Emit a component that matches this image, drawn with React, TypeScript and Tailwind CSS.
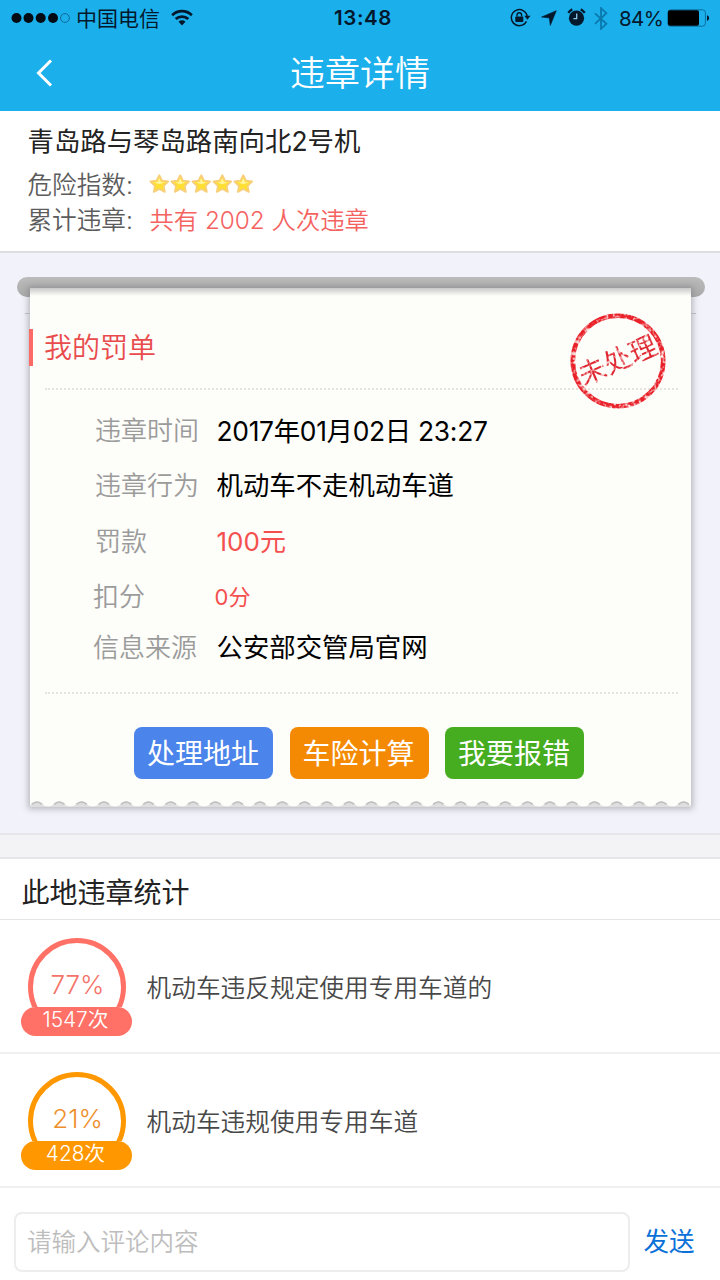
import { clsx } from 'clsx'

const details = [
  { label: '违章时间', value: '2017年01月02日 23:27', row: 'h-[54px] pl-[65px]', text: 'text-[26.4px] tracking-[-0.3px] text-black' },
  { label: '违章行为', value: '机动车不走机动车道', row: 'h-[55px] pl-[65px]', text: 'text-[26.4px] text-black' },
  { label: '罚款', value: '100元', row: 'h-[57px] pl-[65px]', text: 'text-[26px] text-[#f4504f]' },
  { label: '扣分', value: '0分', row: 'h-[54px] pl-[63px]', text: '-ml-0.5 text-[22px] text-[#f4504f]' },
  { label: '信息来源', value: '公安部交管局官网', row: 'h-[47px] pl-[63px]', text: 'text-[26.4px] text-black' },
]

const actions = [
  { label: '处理地址', color: 'bg-[#4b84ea]' },
  { label: '车险计算', color: 'bg-[#f48a04]' },
  { label: '我要报错', color: 'bg-[#45ad1f]' },
]

const stats = [
  {
    percent: '77%',
    count: '1547次',
    name: '机动车违反规定使用专用车道的',
    ring: 'border-[#ff7166] text-[#f4736a]',
    pill: 'bg-[#ff7166]',
  },
  {
    percent: '21%',
    count: '428次',
    name: '机动车违规使用专用车道',
    ring: 'border-[#ff9800] text-[#ee8f2c]',
    pill: 'bg-[#ff9800]',
  },
]

function StatusBar() {
  return (
    <div className="flex h-[37px] items-center text-[#04182c]">
      <div className="flex w-[334px] items-center pl-[11px]">
        <svg className="-mt-[2px]" width="60" height="12" viewBox="0 0 60 12">
          {[5.5, 17.5, 29.7, 42].map((x) => (
            <circle key={x} cx={x} cy="6" r="5" fill="#020a14" />
          ))}
          <circle cx="54" cy="6" r="4.4" fill="none" stroke="#0d6c98" strokeWidth="1" />
        </svg>
        <span className="ml-[5px] text-[21px] leading-none font-[380]">中国电信</span>
        <svg className="-mt-[3px] ml-[11px]" width="22" height="17" viewBox="0 0 22 17">
          <path d="M1.2 6.2a14 14 0 0 1 19.6 0" fill="none" stroke="currentColor" strokeWidth="2.8" />
          <path d="M4.7 10.1a9 9 0 0 1 12.6 0" fill="none" stroke="currentColor" strokeWidth="2.8" />
          <path d="M11 16.4 7.5 12.8a5 5 0 0 1 7 0z" fill="currentColor" />
        </svg>
      </div>
      <span className="w-[60px] text-[20.5px] leading-none font-semibold tracking-[0.6px]">13:48</span>
      <div className="flex flex-1 items-center pl-[116px]">
        {/* rotation lock */}
        <svg className="-mt-[2px]" width="21" height="19" viewBox="0 0 21 19">
          <path d="M16.4 13.4A8 8 0 1 1 17.3 9" fill="none" stroke="currentColor" strokeWidth="1.5" />
          <path d="M14.3 7.8h6.2l-3.1 4z" fill="currentColor" />
          <rect x="5.3" y="8.4" width="8" height="5.6" rx="0.8" fill="currentColor" />
          <path d="M7 8.6V7a2.3 2.3 0 0 1 4.6 0v1.6" fill="none" stroke="currentColor" strokeWidth="1.4" />
        </svg>
        {/* location */}
        <svg className="-mt-[2px] ml-[10px]" width="16" height="16" viewBox="0 0 16 16">
          <path d="M15.3.7 9.3 15.4 8.300 7.900.6 7z" fill="currentColor" stroke="currentColor" strokeWidth="0.6" />
        </svg>
        {/* alarm */}
        <svg className="-mt-[2px] ml-[10px]" width="19" height="19" viewBox="0 0 19 19">
          <circle cx="9.5" cy="10.2" r="7.6" fill="currentColor" />
          <path d="M1.3 4.9a9 9 0 0 1 4-3.5M17.7 4.9a9 9 0 0 0-4-3.5" fill="none" stroke="currentColor" strokeWidth="2.3" />
          <path d="M9.7 5.4v5.2H6.4" fill="none" stroke="#8fc9e8" strokeWidth="1.3" />
        </svg>
        {/* bluetooth */}
        <svg className="-mt-px ml-2" width="14" height="23" viewBox="0 0 14 23">
          <path d="m1 6.3 11.4 10.5L7 21.8V1.2l5.4 5L1 16.8" fill="none" stroke="#0a79ad" strokeWidth="1.8" />
        </svg>
        <span className="ml-[11px] w-[46px] pt-px text-[20.5px] leading-none tracking-[-0.6px]">84%</span>
        <svg className="-mt-px ml-[2px]" width="43" height="18" viewBox="0 0 43 18">
          <rect x="0.8" y="0.8" width="37.6" height="16.4" rx="2.8" fill="none" stroke="#0a6f9f" strokeWidth="1" />
          <rect x="1" y="1.2" width="31" height="15.6" rx="1.8" fill="#000" />
          <path d="M40 6.2c2.8.6 2.8 5 0 5.6z" fill="#04182c" />
        </svg>
      </div>
    </div>
  )
}

function Star() {
  return (
    <svg width="21" height="20" viewBox="0 0 21 20">
      <path
        d="m10.3 1.2 2.7 5.5 6.1.8-4.4 4.3 1.1 6.1-5.5-2.9-5.4 2.9 1-6.1L1.4 7.5l6.1-.8z"
        fill="#ffe030"
        stroke="#f8cf78"
        strokeWidth="1.8"
        strokeLinejoin="round"
      />
      <path d="m10.3 4 1.7 3.9 3.8.5-5.7 1.8-4.9-1.8 3.4-.5z" fill="#fff39c" />
    </svg>
  )
}

function Stamp() {
  return (
    <svg className="absolute top-[24px] left-[539px]" width="98" height="98" viewBox="0 0 98 98">
      <defs>
        <filter id="worn" x="0" y="0" width="100%" height="100%">
          <feTurbulence type="fractalNoise" baseFrequency="0.25" numOctaves="2" seed="9" result="noise" />
          <feColorMatrix in="noise" type="matrix" values="0 0 0 0 0  0 0 0 0 0  0 0 0 0 0  3 0 0 0 -0.6" result="holes" />
          <feComposite in="SourceGraphic" in2="holes" operator="in" />
        </filter>
      </defs>
      <g filter="url(#worn)">
        <rect width="98" height="98" fill="none" />
        <circle cx="49" cy="49" r="45.2" fill="none" stroke="#e9222c" strokeWidth="4.6" />
        <text x="49" y="58" textAnchor="middle" fontSize="27.5" fontWeight="400" fill="#df2832" transform="rotate(-24 49 49)">
          未处理
        </text>
      </g>
    </svg>
  )
}

function DottedLine() {
  return <div className="mr-[13px] ml-[15px] h-0 border-t-2 border-dotted border-[#e6e5dc]" />
}

function TornEdge() {
  return (
    <svg className="absolute bottom-0 left-0" width="661" height="7" viewBox="0 0 661 7">
      <defs>
        <pattern id="torn" width="22.3" height="7" patternUnits="userSpaceOnUse" x="-4.2">
          <path d="M0 7V6.300C4 6.200 5.500 4.500 7 3.200S9.800 1.500 11.150 1.500s2.650.4 4.150 1.700S18.300 6.200 22.300 6.300V7z" fill="#dededf" />
          <path d="M6 4.400C7.800 2.500 9.500 2 11.150 2s3.350.5 5.150 2.400" fill="none" stroke="#bdbdbe" strokeWidth="1.6" />
        </pattern>
      </defs>
      <rect width="661" height="7" fill="url(#torn)" />
    </svg>
  )
}

function Ticket() {
  return (
    <div className="h-[580px] bg-[#f2f2fa] px-[17px] pt-6">
      <div className="h-5 w-[688px] rounded-full bg-gradient-to-b from-[#bcbcbc] to-[#a9a9a9]" />
      <div className="relative -mt-[9px] ml-[13px] h-[519px] w-[661px] bg-[#fdfdf9] shadow-[0_0_6px_2px_rgba(110,110,120,0.45)]">
        <div className="absolute inset-x-0 top-0 h-2 bg-gradient-to-b from-[#c9c9c9] to-[#fdfdf9]" />
        {/* fold marks on both sides */}
        <div className="absolute top-[25px] -left-[5px] h-px w-[5px] bg-[#b5b5bb]" />
        <div className="absolute top-[25px] -right-[5px] h-px w-[5px] bg-[#b5b5bb]" />
        <div className="flex h-[100px] items-center pt-[19px]">
          <div className="-ml-[1px] h-[37px] w-1 bg-[#fb6a66]" />
          <h2 className="ml-[11px] text-[28px] leading-none font-[350] text-[#e94b4d]">我的罚单</h2>
        </div>
        <DottedLine />
        <Stamp />
        <dl className="pt-[14px]">
          {details.map((item) => (
            <div key={item.label} className={clsx('flex items-center leading-none', item.row)}>
              <dt className="text-[26px] font-[350] text-[#9b9b9b]">{item.label}</dt>
              <dd className={clsx('absolute left-[186.5px] font-[380]', item.text)}>{item.value}</dd>
            </div>
          ))}
        </dl>
        <div className="pt-[21px]">
          <DottedLine />
        </div>
        <div className="mt-[33px] ml-[104px] flex gap-[16.5px]">
          {actions.map((action) => (
            <button
              key={action.label}
              className={clsx('h-[52px] w-[139px] rounded-lg pt-[2px] pr-px text-[28px] leading-none font-[380] text-white', action.color)}
            >
              {action.label}
            </button>
          ))}
        </div>
        <TornEdge />
      </div>
    </div>
  )
}

export default function App() {
  return (
    <div className="flex h-[1280px] w-[720px] flex-col overflow-hidden bg-white font-['Inter','Noto_Sans_CJK_SC',sans-serif]">
      <header className="h-[111px] bg-[#1bb0ec]">
        <StatusBar />
        <div className="flex h-[72px] items-center">
          <svg className="ml-9" width="17" height="30" viewBox="0 0 17 30">
            <path d="M15 2.5 2.5 15 15 27.5" fill="none" stroke="#fff" strokeWidth="3" />
          </svg>
          <h1 className="ml-[237px] text-[35px] leading-none font-[350] text-white">违章详情</h1>
        </div>
      </header>

      <section className="h-[142px] border-b-2 border-[#dedee0] px-[27.5px] pt-[11px]">
        <div className="flex h-[38px] items-center text-[26.4px] leading-none font-[380] text-[#222]">青岛路与琴岛路南向北2号机</div>
        <div className="mt-2 flex h-[35px] items-center text-[24.6px] leading-none font-[350] text-[#5c5c5c]">
          <span className="w-[121px]">危险指数:</span>
          <div className="-mt-[3px] flex">
            {[1, 2, 3, 4, 5].map((n) => (
              <Star key={n} />
            ))}
          </div>
        </div>
        <div className="flex h-[35px] items-center text-[24.6px] leading-none font-[350] text-[#5c5c5c]">
          <span className="w-[122px]">累计违章:</span>
          <span className="text-[24.3px] text-[#f4635f]">共有 2002 人次违章</span>
        </div>
      </section>

      <Ticket />

      <div className="h-[26px] border-y-2 border-[#e6e6ea] bg-[#f3f3f6]" />

      <section>
        <h2 className="flex h-[61px] items-center border-b border-[#e4e4e4] pt-2 pl-[21.5px] text-[28px] leading-none font-[380] text-[#222]">
          此地违章统计
        </h2>
        {stats.map((item) => (
          <div key={item.percent} className="flex h-[134px] border-b-2 border-[#f0f0f2] pt-[18px] pl-[21px]">
            <div className="w-[125.5px]">
              <div className="ml-[7px] h-[69px] w-[98px] overflow-hidden">
                <div className={clsx('flex h-[98px] items-center justify-center rounded-full border-[5px] pb-[5px] pl-px text-[26px] leading-none font-[350]', item.ring)}>
                  {item.percent}
                </div>
              </div>
              <div className={clsx('flex h-[29px] w-[111px] items-center justify-center rounded-full pr-[2px] pb-[2px] text-[20.8px] leading-none font-[350] text-white', item.pill)}>
                {item.count}
              </div>
            </div>
            <span className="pt-[38px] text-[24.7px] leading-none font-[350] text-[#484848]">{item.name}</span>
          </div>
        ))}
      </section>

      <footer className="flex pt-6 pl-[14px]">
        <input
          className="h-[60px] w-[616px] rounded-lg border-2 border-[#ededed] px-[11px] text-[24.5px] font-[350] placeholder:text-[#bdbdbd]"
          placeholder="请输入评论内容"
        />
        <button className="ml-[13.5px] text-[25.6px] leading-none font-[380] text-[#0b70d8]">发送</button>
      </footer>
    </div>
  )
}
